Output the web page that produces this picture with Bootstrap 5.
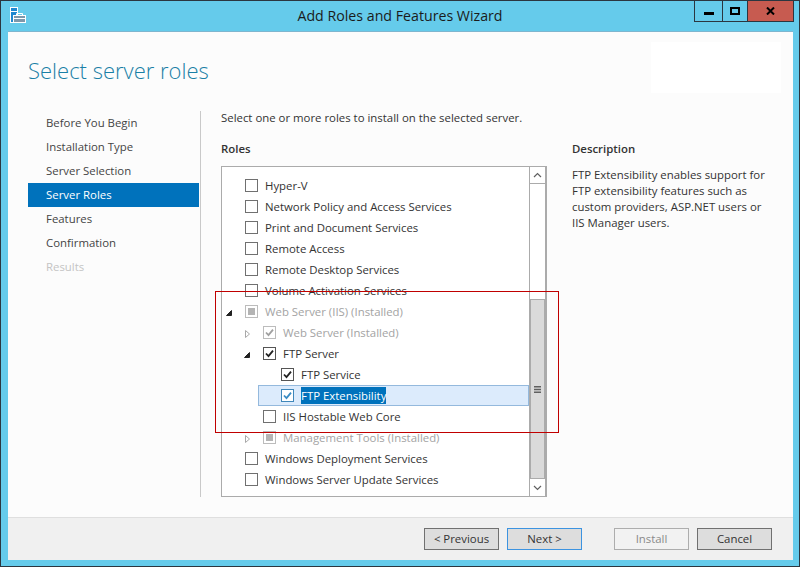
<!DOCTYPE html>
<html lang="en">
<head>
<meta charset="utf-8">
<title>Add Roles and Features Wizard</title>
<link href="https://cdn.jsdelivr.net/npm/bootstrap@5.3.0/dist/css/bootstrap.min.css" rel="stylesheet">
<style>
html,body{margin:0;height:567px;overflow:hidden;background:#65cbeb}
body{font-family:"Open Sans","Noto Sans","Liberation Sans",sans-serif;font-size:11.4px;line-height:16px;color:#333;position:relative}
.wz-win{height:567px;border:1px solid #2b3640;display:flex;flex-direction:column;background:#65cbeb}
.wz-titlebar{height:30px;flex:none;position:relative;display:flex;align-items:center;justify-content:center}
.wz-title{font-size:14.2px;color:#1b1b1b;padding-bottom:1px}
.wz-appicon{position:absolute;left:9px;top:6px}
.wz-controls{position:absolute;top:0;right:5px;display:flex;height:21px;border:1px solid #2b3640;border-top:0}
.wz-ctl{display:flex;align-items:center;justify-content:center;border-right:1px solid #2b3640;width:28px}
.wz-ctl.m2{width:25px}
.wz-ctl.cl{width:45px;background:#c75b50;border-right:0}
.wz-body{flex:1;margin:0 6px 6px 7px;background:#fcfcfc;border-top:1px solid #7fb6cf;display:flex;flex-direction:column;min-height:0}
.wz-head{height:79px;flex:none;position:relative;display:flex}
.wz-h1{margin:23px 0 0 20px;font-size:22px;line-height:30px;font-weight:300;color:#1a7fa6}
.wz-patch{margin:10px 12px 0 auto;width:130px;height:51px;background:#fff}
.wz-main{flex:1;display:flex;min-height:0}
.wz-nav{width:193px;flex:none;border-right:1px solid #c9c9c9;height:386px;padding:0 0 0 20px;background:none;border-radius:0}
.wz-nav .list-group-item{width:171px;height:24px;margin:0;padding:4px 0 4px 18px;border:0;background:transparent;color:#444;font-size:11.4px;line-height:16px;border-radius:0}
.wz-nav .list-group-item.active{background:#0072bc;color:#fff;margin-top:0}
.wz-nav .list-group-item.disabled{color:#c4c4c4}
.wz-center{width:346px;flex:none;padding:0 0 0 20px}
.wz-intro{margin:-1px 0 0;height:31px}
.wz-lbl{font-weight:600;color:#333;margin:0;height:25px;line-height:16px}
.wz-tree{height:331px;width:326px;border:1px solid #ababab;border-right-width:2px;background:#fff;display:flex;box-sizing:border-box}
.wz-rows{flex:1;padding-top:8px;overflow:hidden;min-width:0}
.wz-row{height:21px;display:flex;align-items:center;position:relative;color:#333;white-space:nowrap}
.wz-row.l0{padding-left:23px}
.wz-row.l1{padding-left:41px}
.wz-row.l2{padding-left:59px}
.wz-row.off{color:#a3a3a3}
.wz-row .form-check-input{width:13px;height:13px;margin:0;border:1px solid #707070;border-radius:0;background-color:#fff;flex:none;box-shadow:none;opacity:1;background-size:13px 13px;background-position:-1px -1px;float:none}
.wz-row .form-check-input:checked{background-color:#fff;border-color:#555;background-image:url("data:image/svg+xml,%3Csvg xmlns='http://www.w3.org/2000/svg' viewBox='0 0 13 13'%3E%3Cpath d='M3 6.5l2.5 2.6L10 3.6' fill='none' stroke='%23222' stroke-width='1.8'/%3E%3C/svg%3E")}
.wz-row.off .form-check-input{border-color:#bcbcbc}
.wz-row.off .form-check-input:checked{border-color:#bcbcbc;background-image:url("data:image/svg+xml,%3Csvg xmlns='http://www.w3.org/2000/svg' viewBox='0 0 13 13'%3E%3Cpath d='M3 6.5l2.5 2.6L10 3.6' fill='none' stroke='%23a0a0a0' stroke-width='1.8'/%3E%3C/svg%3E")}
.wz-fill{position:absolute;left:3px;top:3px;width:7px;height:7px;background:#b4b4b4}
.wz-chk{position:relative;display:inline-flex;width:13px;height:13px;margin-right:7px;flex:none}
.wz-exp{position:absolute;top:8px;width:7px;height:8px}
.wz-exp.e0{left:3px}
.wz-exp.e1{left:21px}
.wz-exp.e1o{left:22px}
.wz-sel-bg{position:absolute;left:36px;right:0;top:0;height:21px;background:#dcebfc;border:1px solid #94b9dd}
.wz-row.sel .wz-t{position:relative;background:#0072bc;color:#fff;line-height:17px}
.wz-row.sel .form-check-input:checked{border-color:#3f87ba;background-image:url("data:image/svg+xml,%3Csvg xmlns='http://www.w3.org/2000/svg' viewBox='0 0 13 13'%3E%3Cpath d='M3 6.5l2.5 2.6L10 3.6' fill='none' stroke='%233a8cc4' stroke-width='1.8'/%3E%3C/svg%3E")}
.wz-sb{width:16px;flex:none;border-left:1px solid #ababab;display:flex;flex-direction:column}
.wz-arrow{height:17px;flex:none;display:flex;align-items:center;justify-content:center;background:#fff}
.wz-arrow.up{border-bottom:1px solid #ababab}
.wz-track{flex:1;padding-top:115px;display:flex;flex-direction:column}
.wz-thumb{flex:1;background:#dadada;border:1px solid #ababab;display:flex;align-items:center;justify-content:center}
.wz-side{flex:1;padding-left:25px;padding-right:18px;min-width:0}
.wz-spacer{height:30px}
.wz-dsc{margin:0;color:#333}
.wz-desc-h{height:26px}
.wz-foot{height:43px;flex:none;background:#f0f0f0;border-top:1px solid #dfdfdf;display:flex;align-items:flex-start;padding:10px 21px 0 0;justify-content:flex-end}
.wz-foot .btn{width:75px;height:22px;padding:0;border:1px solid #707070;background:#dddddd;border-radius:0;color:#333;font-size:11.4px;line-height:18px}
.wz-foot .btn+.btn{margin-left:8px}
.wz-foot .btn.nx{border-color:#3c93e0}
.wz-foot .btn.gapl{margin-left:32px}
.wz-foot .btn:disabled{opacity:1;background:#f2f2f2;border-color:#adadad;color:#8a8a8a}
.wz-callout{position:absolute;left:215px;top:291px;width:344px;height:142px;border:1px solid #c00000;pointer-events:none}
</style>
</head>
<body>
<div class="wz-win">
  <div class="wz-titlebar">
    <svg class="wz-appicon" width="17" height="17" viewBox="0 0 17 17"><rect x="0.5" y="0.5" width="7" height="15" fill="#1e88d0" stroke="#fff"/><rect x="1" y="4" width="6" height="1" fill="#fff"/><rect x="3.5" y="8.5" width="12" height="7" fill="#7e98ab" stroke="#fff"/><path d="M6.5 8.5V6.5h6v2" fill="none" stroke="#fff"/><rect x="4" y="11" width="11" height="1" fill="#fff"/></svg>
    <div class="wz-title">Add Roles and Features Wizard</div>
    <div class="wz-controls">
      <div class="wz-ctl"><svg width="10" height="3" viewBox="0 0 10 3" style="margin-top:5px"><rect width="10" height="3" fill="#000"/></svg></div>
      <div class="wz-ctl m2"><svg width="10" height="8" viewBox="0 0 10 8" style="margin-bottom:1px"><rect x="1" y="1" width="8" height="6" fill="none" stroke="#000" stroke-width="2"/></svg></div>
      <div class="wz-ctl cl"><svg width="9" height="8" viewBox="0 0 9 8"><path d="M1 0.5l7 7M8 0.5l-7 7" fill="none" stroke="#000" stroke-width="2"/></svg></div>
    </div>
  </div>
  <div class="wz-body">
    <div class="wz-head">
      <h1 class="wz-h1">Select server roles</h1>
      <div class="wz-patch"></div>
    </div>
    <div class="wz-main">
      <div class="wz-nav list-group">
        <div class="list-group-item">Before You Begin</div>
        <div class="list-group-item">Installation Type</div>
        <div class="list-group-item">Server Selection</div>
        <div class="list-group-item active">Server Roles</div>
        <div class="list-group-item">Features</div>
        <div class="list-group-item">Confirmation</div>
        <div class="list-group-item disabled">Results</div>
      </div>
      <div class="wz-center">
        <p class="wz-intro">Select one or more roles to install on the selected server.</p>
        <p class="wz-lbl">Roles</p>
        <div class="wz-tree">
          <div class="wz-rows">
            <div class="wz-row l0"><span class="wz-chk"><input class="form-check-input" type="checkbox"></span><span class="wz-t">Hyper-V</span></div>
            <div class="wz-row l0"><span class="wz-chk"><input class="form-check-input" type="checkbox"></span><span class="wz-t">Network Policy and Access Services</span></div>
            <div class="wz-row l0"><span class="wz-chk"><input class="form-check-input" type="checkbox"></span><span class="wz-t">Print and Document Services</span></div>
            <div class="wz-row l0"><span class="wz-chk"><input class="form-check-input" type="checkbox"></span><span class="wz-t">Remote Access</span></div>
            <div class="wz-row l0"><span class="wz-chk"><input class="form-check-input" type="checkbox"></span><span class="wz-t">Remote Desktop Services</span></div>
            <div class="wz-row l0"><span class="wz-chk"><input class="form-check-input" type="checkbox"></span><span class="wz-t">Volume Activation Services</span></div>
            <div class="wz-row l0 off"><svg class="wz-exp e0" viewBox="0 0 7 8"><path d="M6.5 1.5V6.5H1.5Z" fill="#222" stroke="#222"/></svg><span class="wz-chk"><input class="form-check-input" type="checkbox"><span class="wz-fill"></span></span><span class="wz-t">Web Server (IIS) (Installed)</span></div>
            <div class="wz-row l1 off"><svg class="wz-exp e1o" viewBox="0 0 7 8"><path d="M1.5 0.5L5.5 4L1.5 7.5Z" fill="#fff" stroke="#a8a8a8"/></svg><span class="wz-chk"><input class="form-check-input" type="checkbox" checked></span><span class="wz-t">Web Server (Installed)</span></div>
            <div class="wz-row l1"><svg class="wz-exp e1" viewBox="0 0 7 8"><path d="M6.5 1.5V6.5H1.5Z" fill="#222" stroke="#222"/></svg><span class="wz-chk"><input class="form-check-input" type="checkbox" checked></span><span class="wz-t">FTP Server</span></div>
            <div class="wz-row l2"><span class="wz-chk"><input class="form-check-input" type="checkbox" checked></span><span class="wz-t">FTP Service</span></div>
            <div class="wz-row l2 sel"><span class="wz-sel-bg"></span><span class="wz-chk"><input class="form-check-input" type="checkbox" checked></span><span class="wz-t">FTP Extensibility</span></div>
            <div class="wz-row l1"><span class="wz-chk"><input class="form-check-input" type="checkbox"></span><span class="wz-t">IIS Hostable Web Core</span></div>
            <div class="wz-row l1 off"><svg class="wz-exp e1o" viewBox="0 0 7 8"><path d="M1.5 0.5L5.5 4L1.5 7.5Z" fill="#fff" stroke="#a8a8a8"/></svg><span class="wz-chk"><input class="form-check-input" type="checkbox"><span class="wz-fill"></span></span><span class="wz-t">Management Tools (Installed)</span></div>
            <div class="wz-row l0"><span class="wz-chk"><input class="form-check-input" type="checkbox"></span><span class="wz-t">Windows Deployment Services</span></div>
            <div class="wz-row l0"><span class="wz-chk"><input class="form-check-input" type="checkbox"></span><span class="wz-t">Windows Server Update Services</span></div>
          </div>
          <div class="wz-sb">
            <div class="wz-arrow up"><svg width="9" height="6" viewBox="0 0 9 6"><path d="M1 5L4.5 1.5L8 5" fill="none" stroke="#606060" stroke-width="1.2"/></svg></div>
            <div class="wz-track">
              <div class="wz-thumb"><svg width="7" height="7" viewBox="0 0 7 7"><path d="M0 0h7v1.4H0zM0 2.8h7v1.4H0zM0 5.6h7V7H0z" fill="#606060"/></svg></div>
            </div>
            <div class="wz-arrow"><svg width="9" height="6" viewBox="0 0 9 6"><path d="M1 1L4.5 4.5L8 1" fill="none" stroke="#606060" stroke-width="1.2"/></svg></div>
          </div>
        </div>
      </div>
      <div class="wz-side">
        <div class="wz-spacer"></div>
        <p class="wz-lbl wz-desc-h">Description</p>
        <p class="wz-dsc">FTP Extensibility enables support for FTP extensibility features such as custom providers, ASP.NET users or IIS Manager users.</p>
      </div>
    </div>
    <div class="wz-foot">
      <button class="btn" type="button">&lt; Previous</button>
      <button class="btn nx" type="button">Next &gt;</button>
      <button class="btn gapl" type="button" disabled>Install</button>
      <button class="btn" type="button">Cancel</button>
    </div>
  </div>
</div>
<div class="wz-callout"></div>
<script src="https://cdn.jsdelivr.net/npm/bootstrap@5.3.0/dist/js/bootstrap.bundle.min.js"></script>
</body>
</html>
